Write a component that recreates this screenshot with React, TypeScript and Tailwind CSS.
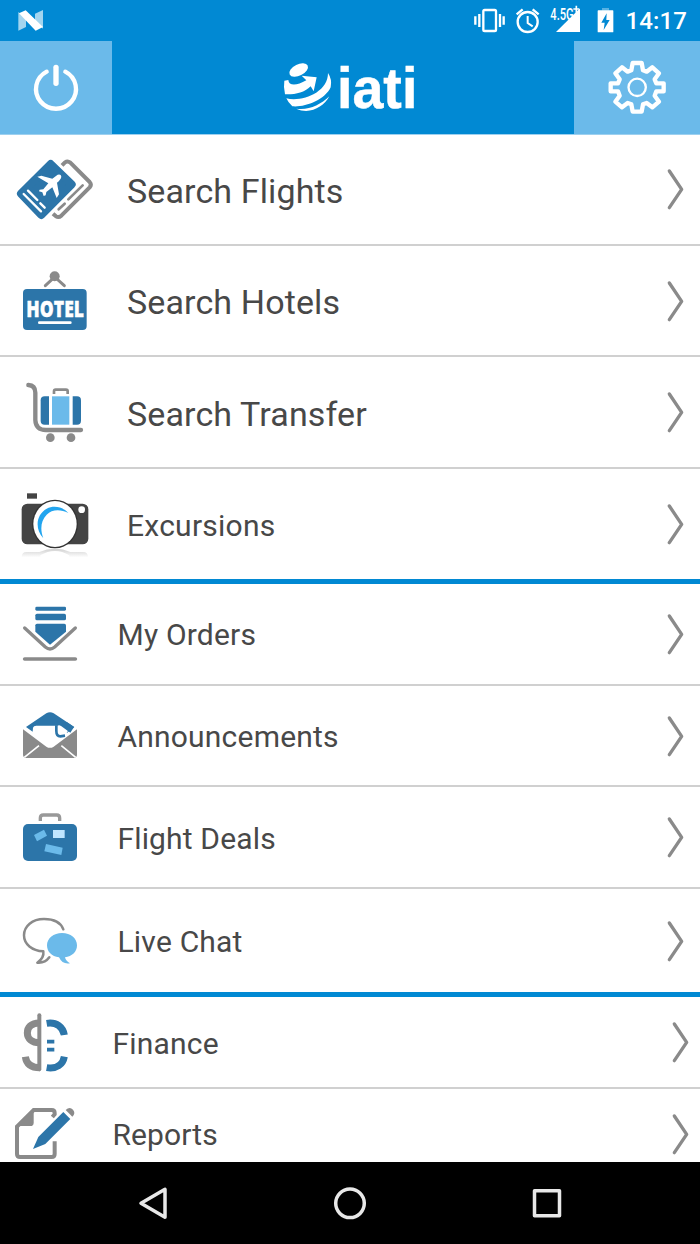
import type { ReactNode } from "react";

const BLUE = "#2c75a9";
const GRAY = "#8a8a8a";
const SKY = "#6bbaea";

function TicketsIcon() {
  return (
    <svg className="h-[110px] w-[108px] shrink-0" viewBox="0 -18 324 330" fill="none" strokeLinecap="round" strokeLinejoin="round">
      <path d="M186 76L195 67Q203 62 211 68L269 126Q276 134 269 142L184 227Q176 234 168 229L159 221" stroke={GRAY} strokeWidth="12" strokeLinecap="butt" />
      <path d="M205 178L248 136M176 208L194 191" stroke={GRAY} strokeWidth="8" />
      <path d="M152 72L215 133L124 225L63 161Z" fill={BLUE} stroke={BLUE} strokeWidth="24" />
      <path d="M84 152L112 180M121 190L134 203M71 162L123 214" stroke="#fff" strokeWidth="7" />
      <path d="M112 110L124 107L157 116L173 104Q183 101 184 110Q183 118 171 128L177 163L170 174L157 142L139 156L137 166L131 168L127 157L117 154L119 149L130 148L145 130Z" fill="#fff" />
    </svg>
  );
}

function HotelIcon() {
  return (
    <svg className="h-[109px] w-[108px] shrink-0" viewBox="0 -27 324 327">
      <path d="M136 92L164 66L193 92" fill="none" stroke={GRAY} strokeWidth="9" strokeLinecap="round" />
      <circle cx="164" cy="64" r="15" fill={GRAY} />
      <rect x="69" y="102" width="191" height="123" rx="12" fill={BLUE} />
      <text x="79" y="187" fontFamily="Open Sans, Liberation Sans, sans-serif" fontWeight="800" fontSize="67" textLength="173" lengthAdjust="spacingAndGlyphs" fill="#fff" stroke="#fff" strokeWidth="1">HOTEL</text>
      <path d="M118 203H211" stroke="#fff" strokeWidth="8" strokeLinecap="round" />
    </svg>
  );
}

function TrolleyIcon() {
  return (
    <svg className="h-[110px] w-[108px] shrink-0" viewBox="0 -39 324 330" fill="none">
      <path d="M85 45Q106 46 106 68V150Q107 180 138 180H243" stroke={GRAY} strokeWidth="13" strokeLinecap="round" />
      <path d="M162 72V64Q162 59 167 59H198Q203 59 203 64V72" stroke={GRAY} strokeWidth="8" />
      <path d="M147 79V164H134Q122 164 122 152V91Q122 79 134 79Z" fill={BLUE} />
      <rect x="156" y="79" width="52" height="85" fill={SKY} />
      <path d="M218 79V164H231Q243 164 243 152V91Q243 79 231 79Z" fill={BLUE} />
      <circle cx="151" cy="203" r="13" fill={GRAY} />
      <circle cx="213" cy="203" r="13" fill={GRAY} />
    </svg>
  );
}

function CameraIcon() {
  return (
    <svg className="h-[110px] w-[108px] shrink-0" viewBox="0 -33 324 330">
      <defs>
        <linearGradient id="camera-reflection" x1="0" y1="0" x2="0" y2="1">
          <stop offset="0" stopColor="#d0d0d0" />
          <stop offset="1" stopColor="#fff" />
        </linearGradient>
      </defs>
      <path d="M65 232Q65 216 80 216H118Q140 206 164 206Q190 206 211 216H249Q264 216 264 232Z" fill="url(#camera-reflection)" />
      <path d="M121 226Q165 200 208 226V234H121Z" fill="#fff" />
      <rect x="81" y="40" width="30" height="16" fill="#444" />
      <rect x="65" y="71" width="200" height="122" rx="17" fill="#444" />
      <ellipse cx="165" cy="132" rx="69" ry="73" fill="#333" />
      <ellipse cx="165" cy="132" rx="65" ry="69" fill="#fff" />
      <circle cx="245" cy="89" r="10" fill="#fff" />
      <path d="M130 175C103 145 109 103 140 86C164 74 191 83 205 99C181 87 156 88 140 104C122 123 120 148 130 175Z" fill="#22a5ef" />
    </svg>
  );
}

function OrdersIcon() {
  return (
    <svg className="h-[100px] w-[108px] shrink-0" viewBox="0 -18 324 300" fill="none" strokeLinecap="round" strokeLinejoin="round">
      <rect x="106" y="50" width="92" height="12" rx="4" fill={BLUE} />
      <rect x="106" y="71" width="92" height="20" rx="5" fill={BLUE} />
      <path d="M111 101H193Q198 101 198 106V125L150 164L106 125V106Q106 101 111 101Z" fill={BLUE} />
      <path d="M74 114L136 171Q150 183 164 171L226 114" stroke={GRAY} strokeWidth="10" />
      <path d="M74 207H226" stroke={GRAY} strokeWidth="11" />
    </svg>
  );
}

function MailIcon() {
  return (
    <svg className="h-[99px] w-[108px] shrink-0" viewBox="0 288 324 297">
      <path d="M78 411L139 370Q150 363 161 370L223 411L202 428L176 407H111Q101 406 99 413L98 425Z" fill={BLUE} />
      <path d="M169 406V422Q169 439 181 439L195 437" fill="none" stroke={BLUE} strokeWidth="8" />
      <path d="M175 406V421Q175 432 183 432H193L205 423L189 407Z" fill="#fff" />
      <path d="M180 406L211 428L222 411L200 396Z" fill={BLUE} />
      <path d="M69 418L139 470Q150 477 161 470L231 418V495Q230 504 221 504H79Q70 504 69 495Z" fill={GRAY} />
      <path d="M73 502L117 467M227 502L184 467" stroke="#fff" strokeWidth="5" />
    </svg>
  );
}

function SuitcaseIcon() {
  return (
    <svg className="h-[100px] w-[108px] shrink-0" viewBox="0 -24 324 300">
      <path d="M121 78V69Q121 60 130 60H170Q179 60 179 69V78" fill="none" stroke="#999" strokeWidth="10" />
      <rect x="69" y="87" width="162" height="111" rx="15" fill={BLUE} />
      <path d="M102 120L132 104L141 122L111 139ZM138 147L188 158L184 180L133 169Z" fill={SKY} />
      <rect x="159" y="105" width="35" height="24" fill="#bfe5ff" />
    </svg>
  );
}

function ChatIcon() {
  return (
    <svg className="h-[103px] w-[108px] shrink-0" viewBox="0 282 324 309">
      <path d="M190 403C182 382 159 372 132 372C97 372 72 393 72 421C72 448 96 467 130 469Q133 488 112 503Q135 505 148 487" fill="none" stroke={GRAY} strokeWidth="7.5" strokeLinecap="round" strokeLinejoin="round" />
      <path d="M186 414C212 414 231 430 231 451C231 471 216 484 195 487Q197 498 210 505Q187 509 177 487C155 485 141 470 141 451C141 430 161 414 186 414Z" fill={SKY} />
    </svg>
  );
}

function FinanceIcon() {
  return (
    <svg className="h-[90px] w-[108px] shrink-0" viewBox="0 -9 324 270" fill="none">
      <path d="M118 46V208" stroke={GRAY} strokeWidth="12" strokeLinecap="round" />
      <path d="M118 69C93 69 82 82 82 99C82 116 96 128 118 128" stroke={GRAY} strokeWidth="21" />
      <path d="M76 170C79 191 93 203 120 203" stroke={GRAY} strokeWidth="21" />
      <path d="M140 70C170 65 189 82 193 105M193 170C189 193 170 208 140 203" stroke={BLUE} strokeWidth="21" />
      <path d="M141 125H163M141 149H163" stroke={BLUE} strokeWidth="11" />
    </svg>
  );
}

function ReportsIcon() {
  return (
    <svg className="h-[90px] w-[108px] shrink-0" viewBox="0 267 324 270" fill="none">
      <path d="M157 351L164 343V339Q164 330 155 330H101L51 380V462Q51 471 60 471H155Q164 471 164 462V424" stroke={GRAY} strokeWidth="12" />
      <path d="M47 378L101 325V368Q101 378 91 378Z" fill={GRAY} />
      <path d="M99 447L115 411L190 336L211 357L136 432Z" fill={BLUE} />
      <path d="M197 330Q209 319 219 329Q228 339 217 350Z" fill={GRAY} />
    </svg>
  );
}

function Chevron() {
  return (
    <svg className="h-[44px] w-[20px] shrink-0" viewBox="0 0 60 132" fill="none">
      <path d="M13 12L50 67L13 122" stroke={GRAY} strokeWidth="10" strokeLinecap="round" strokeLinejoin="round" />
    </svg>
  );
}

type RowProps = { icon: ReactNode; label: string; row: string; text: string; end?: string };

function Row({ icon, label, row, text, end = "pr-[15px]" }: RowProps) {
  return (
    <button className={`flex w-full shrink-0 items-center border-[#d0d0d0] text-left ${row}`}>
      {icon}
      <span className={`flex-1 whitespace-nowrap leading-none text-[#484848] ${text}`}>{label}</span>
      <span className={end}>
        <Chevron />
      </span>
    </button>
  );
}

function StatusBar() {
  return (
    <div className="flex h-[41px] shrink-0 justify-between bg-[#0189d3]">
      <svg className="h-[41px] w-[60px]" viewBox="0 0 180 123">
        <path d="M55 36L78 55V81L55 92ZM105 41L129 30V86L105 64Z" fill="#a3d5ef" />
        <path d="M57 40L77 31L129 81L107 92Z" fill="#fff" />
      </svg>
      <div className="flex">
        <svg className="h-[41px] w-[164px]" viewBox="0 0 492 123" fill="none">
          <rect x="70" y="30" width="38" height="63" rx="4" stroke="#fff" strokeWidth="7" />
          <path d="M46 49V74M58 42V81M120 42V81M131 49V74" stroke="#fff" strokeWidth="7" />
          <circle cx="203" cy="66" r="30" stroke="#fff" strokeWidth="7" />
          <path d="M203 48V69L218 79" stroke="#fff" strokeWidth="6" />
          <path d="M170 43L188 28M218 28L236 43" stroke="#fff" strokeWidth="7" />
          <path d="M288 96L360 25V96Z" fill="#fff" />
          <text x="271" y="59" fontFamily="Roboto, sans-serif" fontWeight="500" fontSize="47" textLength="70" lengthAdjust="spacingAndGlyphs" fill="#fff">4.5G</text>
          <path d="M340 27H357M349 17V38" stroke="#fff" strokeWidth="5" />
          <rect x="426" y="24" width="21" height="8" fill="#57b2e3" />
          <rect x="413" y="31" width="47" height="66" rx="2" fill="#fff" />
          <path d="M440 40L424 68H434L431 90L449 60H439Z" fill="#0189d3" />
        </svg>
        <span className="w-[76px] whitespace-nowrap pl-[1.5px] pt-[9px] font-[Roboto,sans-serif] text-[24px] font-medium leading-[25px] tracking-[0.1px] text-white">14:17</span>
      </div>
    </div>
  );
}

function Header() {
  return (
    <header className="flex h-[94px] shrink-0 border-b border-[#9dd0ef] bg-[#0189d3]">
      <button className="w-[112px] bg-[#6bbaea]" aria-label="Log out">
        <svg className="h-[93px] w-[112px]" viewBox="0 123 336 279" fill="none" stroke="#fff" strokeLinecap="round">
          <path d="M140 215A60 59 0 1 0 196 215" strokeWidth="13" />
          <path d="M168 202V250" strokeWidth="16" />
        </svg>
      </button>
      <div className="flex flex-1 items-center justify-center">
        <svg className="h-[93px] w-[462px]" viewBox="-474 -27 1386 279">
          <ellipse cx="86" cy="60" rx="30" ry="17" transform="rotate(-26 86 60)" fill="#fff" />
          <path d="M43 92L55 90C56 108 80 108 109 91L95 77L140 82L131 124L122 109C103 129 75 134 45 133Q40 110 43 92Z" fill="#fff" />
          <path d="M49 145C95 157 174 128 174 69Q187 88 182 112C165 150 103 173 67 169Q54 157 49 145Z" fill="#fff" />
          <path d="M79 176C117 181 151 165 178 139C161 171 119 195 79 176Z" fill="#fff" />
          <text x="201" y="175" fontFamily="Liberation Sans, sans-serif" fontWeight="700" fontSize="173" textLength="241" lengthAdjust="spacingAndGlyphs" fill="#fff" stroke="#fff" strokeWidth="1.5">iati</text>
        </svg>
      </div>
      <button className="w-[126px] bg-[#6bbaea]" aria-label="Settings">
        <svg className="h-[93px] w-[126px]" viewBox="342 123 378 279" fill="none" stroke="#fff" strokeLinejoin="round">
          <path d="M518 189H545L549 211L560 215L577 202L597 220L584 238L589 250H611V274H589L584 287L597 305L577 322L560 309L549 313L545 335H518L514 313L503 309L486 322L466 305L479 287L474 274H452V250H474L479 238L466 220L486 202L503 215L514 211Z" strokeWidth="13" />
          <circle cx="531.5" cy="262" r="26" strokeWidth="7" />
        </svg>
      </button>
    </header>
  );
}

function NavBar() {
  return (
    <nav className="flex h-[82px] shrink-0 items-center justify-center gap-[157px] bg-black">
      <svg className="size-10" viewBox="0 0 40 40" fill="none" stroke="#e8e8e8" strokeWidth="3.5" strokeLinejoin="round">
        <path d="M8 20.3L32 6.3V34.3Z" />
      </svg>
      <svg className="size-10" viewBox="0 0 40 40" fill="none" stroke="#e8e8e8" strokeWidth="3.5">
        <circle cx="20" cy="20.3" r="14.3" />
      </svg>
      <svg className="size-10" viewBox="0 0 40 40" fill="none" stroke="#e8e8e8" strokeWidth="3.5" strokeLinejoin="round">
        <rect x="7.5" y="7.8" width="25" height="25" />
      </svg>
    </nav>
  );
}

export default function App() {
  const large = "pl-[19px] pt-[3px] text-[34px] tracking-[0.13px]";
  const medium = "pl-[9.5px] pt-[2px] text-[30px] tracking-[0.2px]";
  return (
    <div className="flex h-[1244px] w-[700px] flex-col overflow-hidden bg-white font-[Roboto,sans-serif]">
      <StatusBar />
      <Header />
      <main className="-mt-px flex h-[1028px] shrink-0 flex-col overflow-hidden">
        <Row icon={<TicketsIcon />} label="Search Flights" row="h-[112px] border-b-2" text={large} />
        <Row icon={<HotelIcon />} label="Search Hotels" row="h-[111px] border-b-2" text={large} />
        <Row icon={<TrolleyIcon />} label="Search Transfer" row="h-[112px] border-b-2" text={large} />
        <Row icon={<CameraIcon />} label="Excursions" row="h-[110px]" text="pl-[19px] pt-[4px] text-[30px] tracking-[0.25px]" />
        <div className="h-[5px] shrink-0 bg-[#0189d3]" />
        <Row icon={<OrdersIcon />} label="My Orders" row="h-[102px] border-b-2" text={medium} />
        <Row icon={<MailIcon />} label="Announcements" row="h-[101px] border-b-2" text={medium} />
        <Row icon={<SuitcaseIcon />} label="Flight Deals" row="h-[102px] border-b-2" text="pl-[9.5px] pt-[3px] text-[30px] tracking-[0.15px]" />
        <Row icon={<ChatIcon />} label="Live Chat" row="h-[103px]" text={medium} />
        <div className="h-[5px] shrink-0 bg-[#0189d3]" />
        <Row icon={<FinanceIcon />} label="Finance" row="h-[92px] border-b-2" text="pl-[4.5px] pt-[3px] text-[30px] tracking-[0.2px]" end="pr-[10px]" />
        <Row icon={<ReportsIcon />} label="Reports" row="h-[90px]" text="pl-[4.5px] pt-[2px] text-[30px] tracking-[0.1px]" end="pr-[10px]" />
      </main>
      <NavBar />
    </div>
  );
}
